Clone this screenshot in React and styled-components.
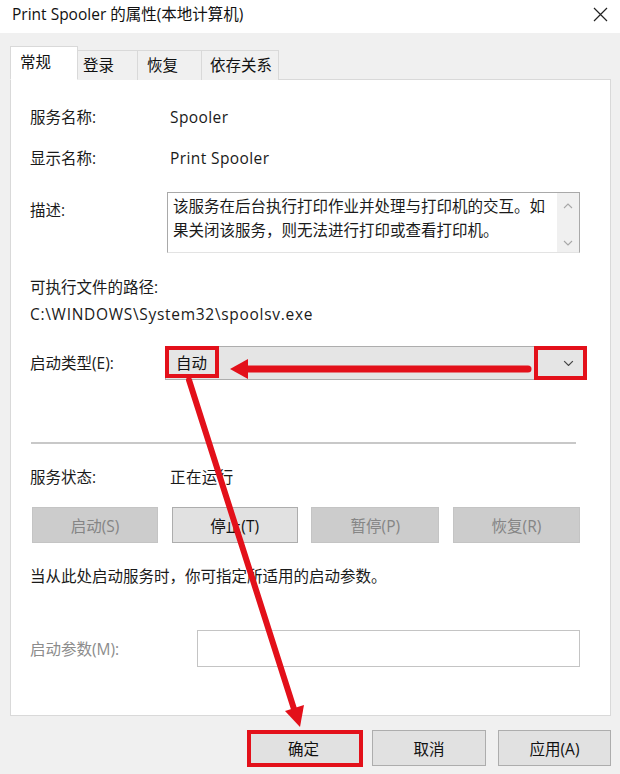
import React from 'react';
import styled, { createGlobalStyle } from 'styled-components';

const GlobalStyle = createGlobalStyle`
  html, body {
    margin: 0;
    padding: 0;
    background: #f0f0f0;
  }
  body {
    font-family: "Open Sans", "Noto Sans CJK SC", "Liberation Sans", sans-serif;
    color: #1a1a1a;
  }
`;

const Window = styled.div`
  position: relative;
  width: 620px;
  height: 774px;
  background: #f0f0f0;
  display: flex;
  flex-direction: column;
  overflow: hidden;
  font-size: 15.5px;
`;

const TitleBar = styled.div`
  height: 33px;
  box-sizing: border-box;
  background: #fff;
  padding: 4px 12px 0 12px;
  display: flex;
  justify-content: space-between;
  align-items: flex-start;
  line-height: 20px;
  color: #111;
`;

const CloseIcon = styled.svg`
  margin-top: 3px;
`;

const Body = styled.div`
  flex: 1;
  padding: 13px 9px 0 10px;
  display: flex;
  flex-direction: column;
`;

const TabStrip = styled.div`
  display: flex;
  align-items: flex-end;
  height: 34px;
  margin-bottom: -1px;
  position: relative;
  z-index: 1;
`;

const Tab = styled.div`
  box-sizing: border-box;
  width: ${p => p.$w}px;
  height: ${p => (p.$active ? 34 : 30)}px;
  margin-left: ${p => (p.$first ? 0 : -1)}px;
  padding-left: ${p => p.$pad}px;
  background: ${p => (p.$active ? '#fff' : '#f0f0f0')};
  border: 1px solid #d9d9d9;
  border-bottom: ${p => (p.$active ? '1px solid #fff' : 'none')};
  line-height: ${p => (p.$active ? 30 : 28)}px;
  color: #111;
  position: relative;
  z-index: ${p => (p.$active ? 2 : 1)};
`;

const Panel = styled.div`
  box-sizing: border-box;
  height: 637px;
  background: #fff;
  border: 1px solid #d9d9d9;
  padding: 0 30px 0 19px;
  display: flex;
  flex-direction: column;
`;

const Row = styled.div`
  display: grid;
  grid-template-columns: ${p => p.$label || 140}px 1fr;
  align-items: ${p => p.$top ? 'start' : 'center'};
  margin-top: ${p => p.$mt}px;
  line-height: 20px;
`;

const Label = styled.div`
  color: ${p => (p.$disabled ? '#8c8c8c' : '#1a1a1a')};
  padding-top: ${p => p.$pt || 0}px;
`;

const Value = styled.div`
  color: #1a1a1a;
  letter-spacing: 0.4px;
`;

const Line = styled.div`
  margin-top: ${p => p.$mt}px;
  line-height: 20px;
  letter-spacing: ${p => p.$ls || 0}px;
`;

const DescBox = styled.div`
  margin-left: -3px;
  width: 413px;
  height: 61px;
  box-sizing: border-box;
  border: 1px solid #a9a9a9;
  border-bottom-color: #e3e3e3;
  display: flex;
`;

const DescText = styled.div`
  flex: 1;
  padding: 1px 0 0 5px;
  line-height: 24px;
  color: #1a1a1a;
`;

const ScrollBar = styled.div`
  width: 22px;
  background: #f0f0f0;
  display: flex;
  flex-direction: column;
  justify-content: space-between;
  align-items: center;
  padding: 10px 0 6px;
`;

const Select = styled.div`
  margin-left: -5px;
  width: 419px;
  height: 34px;
  box-sizing: border-box;
  background: #e5e5e5;
  border: 1px solid #adadad;
  display: flex;
  align-items: center;
  justify-content: space-between;
  padding: 0 9px 0 10px;
  color: #111;
`;

const Separator = styled.div`
  margin-top: 62px;
  margin-left: 1px;
  width: 545px;
  height: 2px;
  background: #c8c8c8;
`;

const ButtonRow = styled.div`
  display: flex;
  justify-content: space-between;
  margin-top: 20px;
  padding-left: 2px;
`;

const Button = styled.div`
  box-sizing: border-box;
  width: ${p => p.$w || 126}px;
  height: 36px;
  display: flex;
  align-items: center;
  justify-content: center;
  background: ${p => (p.$disabled ? '#cccccc' : '#e1e1e1')};
  border: 1px solid ${p => (p.$disabled ? '#c4c4c4' : '#adadad')};
  color: ${p => (p.$disabled ? '#858585' : '#111')};
`;

const Input = styled.div`
  height: 37px;
  box-sizing: border-box;
  border: 1px solid #c4c4c4;
  background: #fff;
`;

const Footer = styled.div`
  display: flex;
  justify-content: flex-end;
  gap: 12px;
  margin-top: 14px;
`;

const Overlay = styled.svg`
  position: absolute;
  left: 0;
  top: 0;
  pointer-events: none;
`;

const Chevron = ({ up, color = '#a8a8a8', w = 10 }) => (
  <svg width={w} height={w / 2 + 1} viewBox="0 0 10 6">
    <polyline
      points={up ? '1,5 5,1 9,5' : '1,1 5,5 9,1'}
      fill="none"
      stroke={color}
      strokeWidth="1.1"
    />
  </svg>
);

const RED = '#e3101a';

export default function App() {
  return (
    <>
      <GlobalStyle />
      <Window>
        <TitleBar>
          <span>Print Spooler 的属性(本地计算机)</span>
          <CloseIcon width="15" height="15" viewBox="0 0 15 15">
            <path d="M1 1 L14 14 M14 1 L1 14" stroke="#222" strokeWidth="1.2" />
          </CloseIcon>
        </TitleBar>

        <Body>
          <TabStrip>
            <Tab $active $first $w={68} $pad={9}>常规</Tab>
            <Tab $w={61} $pad={5}>登录</Tab>
            <Tab $w={65} $pad={9}>恢复</Tab>
            <Tab $w={78} $pad={8}>依存关系</Tab>
          </TabStrip>

          <Panel>
            <Row $mt={27}>
              <Label>服务名称:</Label>
              <Value>Spooler</Value>
            </Row>
            <Row $mt={21}>
              <Label>显示名称:</Label>
              <Value>Print Spooler</Value>
            </Row>
            <Row $mt={24} $top>
              <Label $pt={8}>描述:</Label>
              <DescBox>
                <DescText>
                  该服务在后台执行打印作业并处理与打印机的交互。如
                  <br />
                  果关闭该服务，则无法进行打印或查看打印机。
                </DescText>
                <ScrollBar>
                  <Chevron up />
                  <Chevron />
                </ScrollBar>
              </DescBox>
            </Row>
            <Line $mt={24}>可执行文件的路径:</Line>
            <Line $mt={7} $ls={0.7}>C:\WINDOWS\System32\spoolsv.exe</Line>
            <Row $mt={22}>
              <Label>启动类型(E):</Label>
              <Select>
                <span>自动</span>
                <Chevron color="#444" w={11} />
              </Select>
            </Row>

            <Separator />

            <Row $mt={23}>
              <Label>服务状态:</Label>
              <Value>正在运行</Value>
            </Row>
            <ButtonRow>
              <Button $disabled>启动(S)</Button>
              <Button>停止(T)</Button>
              <Button $disabled $w={128}>暂停(P)</Button>
              <Button $disabled $w={127}>恢复(R)</Button>
            </ButtonRow>
            <Line $mt={23}>当从此处启动服务时，你可指定所适用的启动参数。</Line>
            <Row $mt={44} $label={167}>
              <Label $disabled>启动参数(M):</Label>
              <Input />
            </Row>
          </Panel>

          <Footer>
            <Button $w={113}>确定</Button>
            <Button $w={114}>取消</Button>
            <Button $w={113}>应用(A)</Button>
          </Footer>
        </Body>

        <Overlay width="620" height="774" viewBox="0 0 620 774">
          <rect x="167" y="348" width="50" height="28" fill="none" stroke={RED} strokeWidth="4" />
          <rect x="536" y="348" width="49" height="30" fill="none" stroke={RED} strokeWidth="4" />
          <rect x="249" y="732" width="112" height="33" fill="none" stroke={RED} strokeWidth="4" />
          <line x1="528" y1="369" x2="244" y2="369" stroke={RED} strokeWidth="7" strokeLinecap="round" />
          <polygon points="230,369 248,359 248,379" fill={RED} />
          <line x1="189" y1="380" x2="294" y2="709" stroke={RED} strokeWidth="6" strokeLinecap="round" />
          <polygon points="300,727 304,705 285,711" fill={RED} />
        </Overlay>
      </Window>
    </>
  );
}
